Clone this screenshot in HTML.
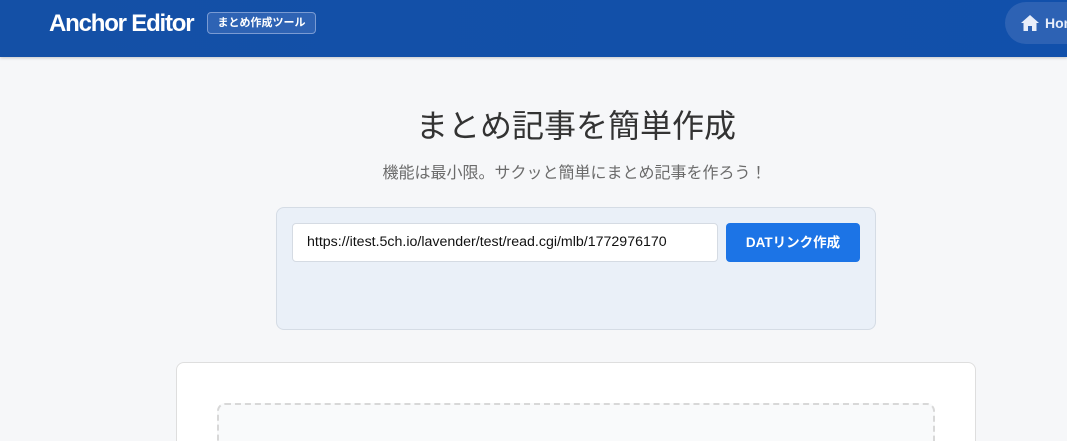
<!DOCTYPE html>
<html><head><meta charset="utf-8"><style>
*{box-sizing:border-box;margin:0;padding:0}
html,body{width:1067px;height:441px;overflow:hidden}
body{background:#f6f7f9;font-family:"Liberation Sans","Noto Sans CJK JP",sans-serif;position:relative}
.hdr{position:absolute;left:0;top:0;width:1067px;height:57px;background:linear-gradient(90deg,#1450a6,#1150ab);box-shadow:0 1px 3px rgba(0,0,0,.2)}
.logo{position:absolute;left:49px;top:10px;color:#fff;font-size:24px;font-weight:bold;letter-spacing:-1.2px}
.tag{position:absolute;left:207px;top:12px;height:22px;width:109px;border:1px solid #7a9bd3;border-radius:4px;background:#2e63b4;color:#fff;font-size:11px;font-weight:bold;line-height:20px;text-align:center}
.home{position:absolute;left:1005px;top:2px;width:100px;height:42px;border-radius:21px;background:#2d62b4;color:#e8eefa;font-weight:bold;font-size:14px;line-height:42px;padding-left:40px}
.home svg{position:absolute;left:16px;top:13px}
h1{position:absolute;left:0;width:1152px;top:101px;text-align:center;font-size:32px;font-weight:normal;color:#333}
.sub{position:absolute;left:0;width:1149px;top:159px;text-align:center;font-size:16px;color:#6b6b6b}
.panel{position:absolute;left:276px;top:207px;width:600px;height:123px;background:#eaf0f8;border:1px solid #d5dce5;border-radius:8px}
.inp{position:absolute;left:292px;top:223px;width:426px;height:39px;background:#fff;border:1px solid #d5dbe3;border-radius:4px;font-size:14.2px;color:#111;line-height:37px;padding-left:14px}
.btn{position:absolute;left:726px;top:223px;width:134px;height:39px;background:#1c74e6;border-radius:4px;color:#fff;font-weight:bold;font-size:13.5px;text-align:center;line-height:39px}
.card{position:absolute;left:176px;top:362px;width:800px;height:100px;background:#fff;border:1px solid #dedede;border-radius:8px}
.dash{position:absolute;left:217px;top:403px;width:718px;height:60px;background:#f9fafb;border:2px dashed #d8d8d8;border-radius:8px}
</style></head><body>
<div class="hdr">
<div class="logo">Anchor Editor</div>
<div class="tag">まとめ作成ツール</div>
<div class="home"><svg width="18" height="16" viewBox="0 0 18 16"><path d="M9 0L0 8h2.5v8h4.5v-5h4v5h4.5V8H18z" fill="#e8eefa"/></svg>Home</div>
</div>
<h1>まとめ記事を簡単作成</h1>
<div class="sub">機能は最小限。サクッと簡単にまとめ記事を作ろう！</div>
<div class="panel"></div>
<div class="inp">https://itest.5ch.io/lavender/test/read.cgi/mlb/1772976170</div>
<div class="btn">DATリンク作成</div>
<div class="card"></div>
<div class="dash"></div>
</body></html>
